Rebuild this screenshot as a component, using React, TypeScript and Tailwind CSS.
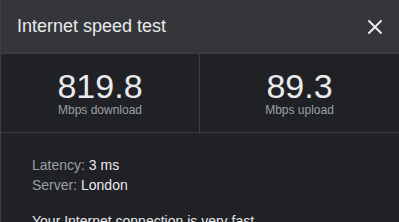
import { X } from 'lucide-react';

export default function App() {
    return (
        <div className="w-[399px] h-[222px] overflow-hidden bg-[#202124] font-['Liberation_Sans',Arial,sans-serif] border-l border-[#3c4043]">
            <div className="h-[54px] bg-[#35363a] flex items-center justify-between pl-4 pr-3 border-b border-[#3c4043]">
                <h1 className="text-[18px] text-[#e8eaed]">Internet speed test</h1>
                <X className="w-[24px] h-[24px] text-[#e8eaed]" strokeWidth={2} />
            </div>
            <div className="grid grid-cols-2 h-[79px] border-b border-[#3c4043]">
                <div className="flex flex-col items-center pt-[16px] border-r border-[#3c4043]">
                    <span className="text-[34px] leading-[32px] text-[#e8eaed]">819.8</span>
                    <span className="mt-[2px] text-[12px] leading-[12px] text-[#9aa0a6]">Mbps download</span>
                </div>
                <div className="flex flex-col items-center pt-[16px]">
                    <span className="text-[34px] leading-[32px] text-[#e8eaed]">89.3</span>
                    <span className="mt-[2px] text-[12px] leading-[12px] text-[#9aa0a6]">Mbps upload</span>
                </div>
            </div>
            <div className="pl-[31px] pt-[22px] text-[14px] leading-[20px]">
                <p className="text-[#9aa0a6]">Latency: <span className="text-[#e8eaed]">3 ms</span></p>
                <p className="text-[#9aa0a6]">Server: <span className="text-[#e8eaed]">London</span></p>
                <p className="mt-[16px] text-[#e8eaed]">Your Internet connection is very fast</p>
            </div>
        </div>
    );
}
